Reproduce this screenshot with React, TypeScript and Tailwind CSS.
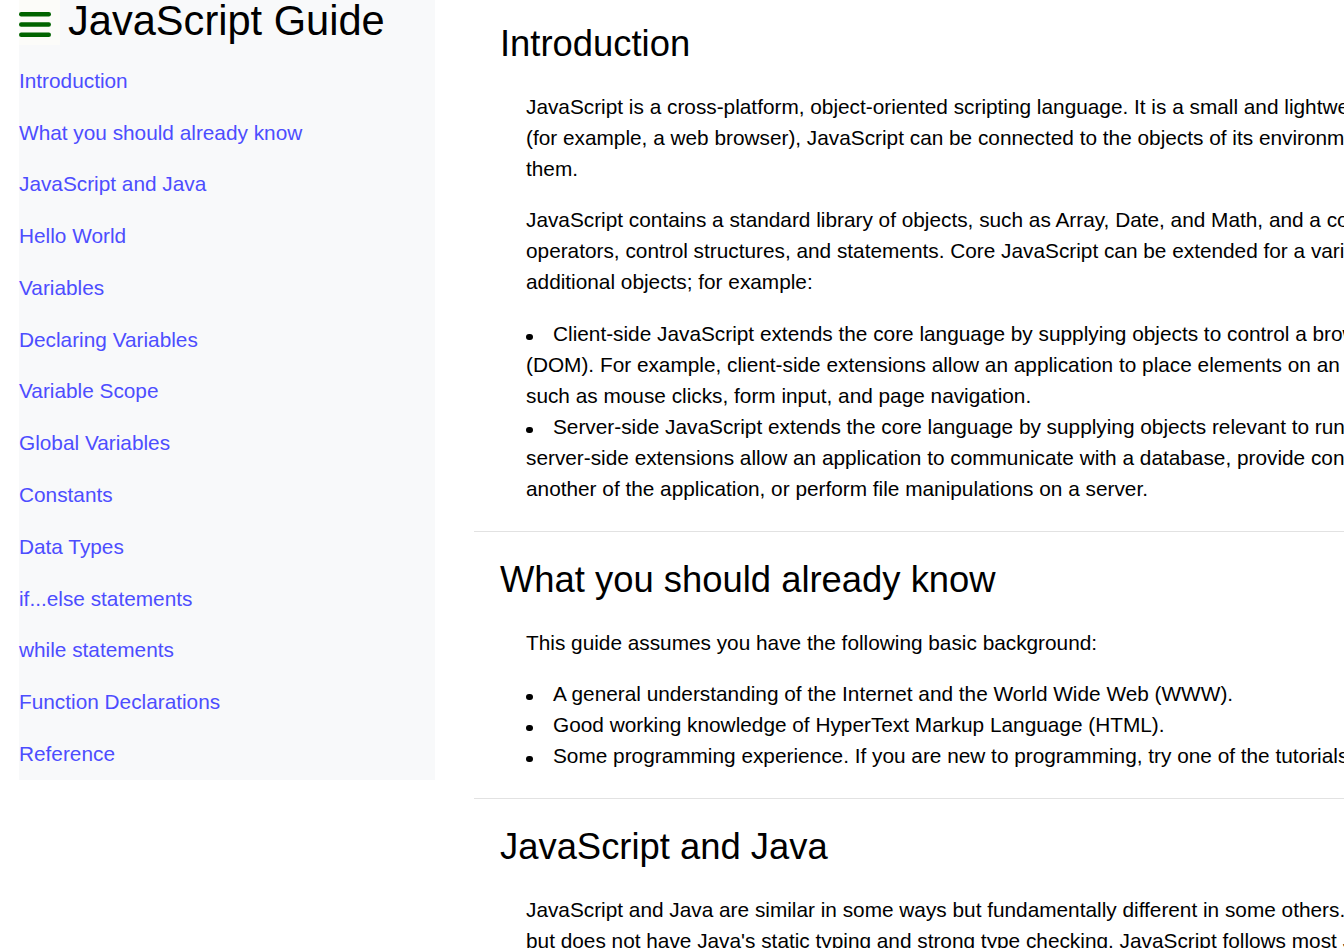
import React from "react";

const navItems = [
  "Introduction",
  "What you should already know",
  "JavaScript and Java",
  "Hello World",
  "Variables",
  "Declaring Variables",
  "Variable Scope",
  "Global Variables",
  "Constants",
  "Data Types",
  "if...else statements",
  "while statements",
  "Function Declarations",
  "Reference",
];

function Lines({ lines }: { lines: string[] }) {
  return (
    <>
      {lines.map((l, i) => (
        <React.Fragment key={i}>
          {i > 0 && <br />}
          {l}
        </React.Fragment>
      ))}
    </>
  );
}

function Bullet({ lines }: { lines: string[] }) {
  return (
    <li className="whitespace-nowrap">
      <span className="mb-[1px] mr-[20.5px] inline-block h-[6.5px] w-[6.5px] rounded-full bg-black" />
      <Lines lines={lines} />
    </li>
  );
}

function Para({ lines, className = "" }: { lines: string[]; className?: string }) {
  return (
    <p className={"whitespace-nowrap " + className}>
      <Lines lines={lines} />
    </p>
  );
}

export default function App() {
  return (
    <div className="h-screen w-full overflow-hidden bg-white font-['Liberation_Sans',Arial,sans-serif] text-black">
      <div className="flex w-[2400px] items-start">
        <aside className="ml-[19px] h-[780px] w-[416px] shrink-0 bg-[#f8f9fa]">
          <div className="flex h-[47px] items-start">
            <button className="flex h-[45px] w-[41px] items-start bg-[#fcfcf9] pt-[11px]">
              <svg width="32" height="27" viewBox="0 0 32 27">
                <line x1="2.2" y1="3.2" x2="29.8" y2="3.2" stroke="#006400" strokeWidth="4.4" strokeLinecap="round" />
                <line x1="2.2" y1="13.5" x2="29.8" y2="13.5" stroke="#006400" strokeWidth="4.4" strokeLinecap="round" />
                <line x1="2.2" y1="23.8" x2="29.8" y2="23.8" stroke="#006400" strokeWidth="4.4" strokeLinecap="round" />
              </svg>
            </button>
            <h1 className="ml-[8px] whitespace-nowrap text-[41.6px] leading-[42px] font-normal">JavaScript Guide</h1>
          </div>
          <nav className="mt-[8px]">
            {navItems.map((n) => (
              <a
                key={n}
                href={"#" + n}
                className="flex h-[51.77px] items-center text-[20.8px] leading-[24px] text-[#4d4dff]"
              >
                {n}
              </a>
            ))}
          </nav>
        </aside>

        <main className="ml-[39px] w-[1800px] shrink-0 text-[20.8px] leading-[31px]">
          <section className="border-b border-[#e2e2e2] pt-[23px] pb-[27px]">
            <h2 className="ml-[26px] text-[36.4px] leading-[42px] font-normal">Introduction</h2>
            <div className="ml-[52px] mt-[25.5px]">
              <Para
                lines={[
                  "JavaScript is a cross-platform, object-oriented scripting language. It is a small and lightweight language. Inside a host environment",
                  "(for example, a web browser), JavaScript can be connected to the objects of its environment to provide programmatic control over",
                  "them.",
                ]}
              />
              <Para
                className="mt-[20.8px]"
                lines={[
                  "JavaScript contains a standard library of objects, such as Array, Date, and Math, and a core set of language elements such as",
                  "operators, control structures, and statements. Core JavaScript can be extended for a variety of purposes by supplementing it with",
                  "additional objects; for example:",
                ]}
              />
              <ul className="mt-[20.8px]">
                <Bullet
                  lines={[
                    "Client-side JavaScript extends the core language by supplying objects to control a browser and its Document Object Model",
                    "(DOM). For example, client-side extensions allow an application to place elements on an HTML form and respond to user events",
                    "such as mouse clicks, form input, and page navigation.",
                  ]}
                />
                <Bullet
                  lines={[
                    "Server-side JavaScript extends the core language by supplying objects relevant to running JavaScript on a server. For example,",
                    "server-side extensions allow an application to communicate with a database, provide continuity of information from one invocation to",
                    "another of the application, or perform file manipulations on a server.",
                  ]}
                />
              </ul>
            </div>
          </section>

          <section className="border-b border-[#e2e2e2] pt-[27px] pb-[27px]">
            <h2 className="ml-[26px] text-[36.4px] leading-[42px] font-normal">What you should already know</h2>
            <div className="ml-[52px] mt-[25.5px]">
              <Para lines={["This guide assumes you have the following basic background:"]} />
              <ul className="mt-[20.8px]">
                <Bullet lines={["A general understanding of the Internet and the World Wide Web (WWW)."]} />
                <Bullet lines={["Good working knowledge of HyperText Markup Language (HTML)."]} />
                <Bullet
                  lines={[
                    "Some programming experience. If you are new to programming, try one of the tutorials linked on the main page about JavaScript.",
                  ]}
                />
              </ul>
            </div>
          </section>

          <section className="pt-[27px]">
            <h2 className="ml-[26px] text-[36.4px] leading-[42px] font-normal">JavaScript and Java</h2>
            <div className="ml-[52px] mt-[25.5px]">
              <Para
                lines={[
                  "JavaScript and Java are similar in some ways but fundamentally different in some others. The JavaScript language resembles Java",
                  "but does not have Java's static typing and strong type checking. JavaScript follows most Java expression syntax, naming conventions and",
                  "basic control-flow constructs which was the reason why it was renamed from LiveScript to JavaScript.",
                ]}
              />
            </div>
          </section>
        </main>
      </div>
    </div>
  );
}
